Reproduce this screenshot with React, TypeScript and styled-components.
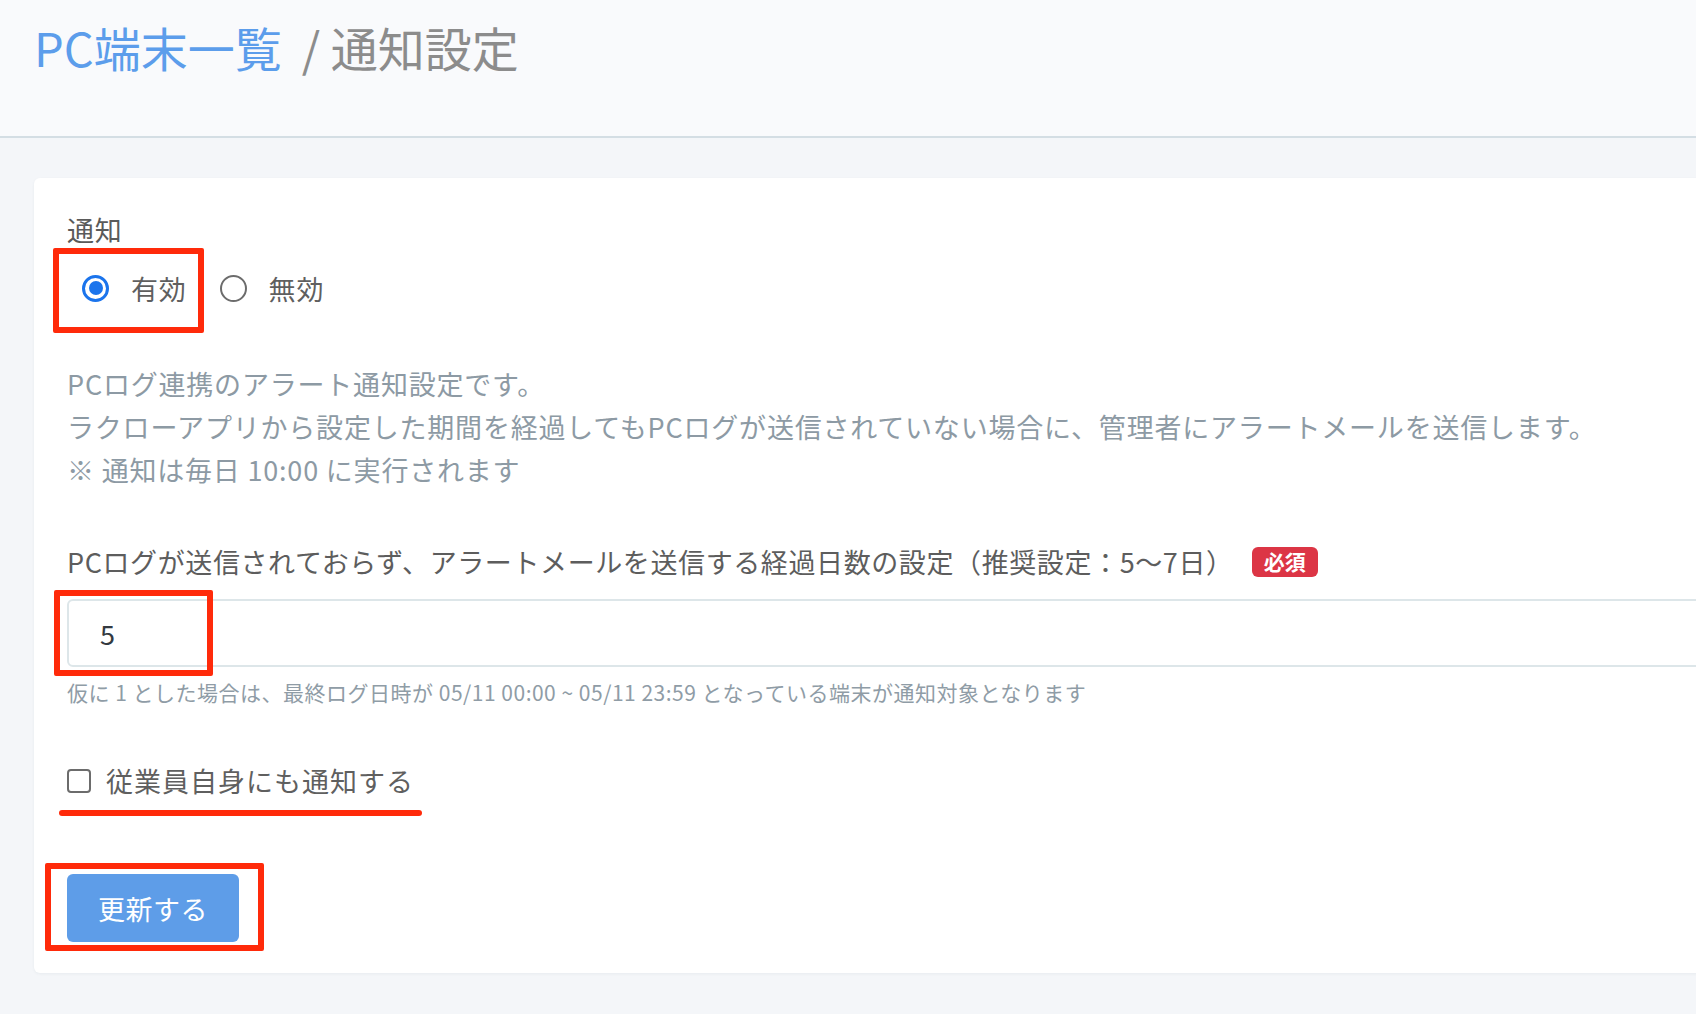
import styled, { createGlobalStyle } from 'styled-components';

const GlobalStyle = createGlobalStyle`
  html, body {
    margin: 0;
    padding: 0;
    overflow: hidden;
    background-color: #f4f6f9;
  }
  body {
    font-family: "Noto Sans CJK JP", "Noto Sans", sans-serif;
  }
`;

const Page = styled.div`
  width: 1696px;
  height: 1014px;
  background-color: #f4f6f9;
  overflow: hidden;
`;

const Header = styled.header`
  height: 138px;
  background-color: #f9fafc;
  border-bottom: 2px solid #d4dee4;
  display: flex;
  align-items: flex-start;
  padding-left: 34px;
  padding-top: 16px;
  box-sizing: border-box;
`;

const Breadcrumb = styled.h1`
  margin: 0;
  font-size: 47px;
  font-weight: 400;
  line-height: 62px;
  color: #8c8c8c;
  display: flex;
  align-items: center;
  gap: 20px;
`;

const CrumbLink = styled.span`
  color: #5c9deb;
`;

const Main = styled.main`
  padding: 40px 0 0 34px;
`;

const Card = styled.section`
  width: 1800px;
  background-color: #fff;
  border-radius: 6px;
  box-shadow: 0 1px 3px rgba(40, 60, 80, 0.06);
  padding: 32px 33px 31px;
  box-sizing: border-box;
  display: flex;
  flex-direction: column;
`;

const Label = styled.div`
  font-size: 27px;
  line-height: 39px;
  letter-spacing: 0.8px;
  color: #5a5a5a;
  display: flex;
  align-items: center;
`;

const RadioRow = styled.div`
  display: flex;
  align-items: center;
  height: 38px;
  margin-top: 20px;
  gap: 33px;
`;

const RadioOption = styled.label<{ $first?: boolean }>`
  position: relative;
  display: flex;
  align-items: center;
  gap: 22px;
  margin-left: ${p => (p.$first ? '15px' : '0')};
  font-size: 27px;
  letter-spacing: 0.8px;
  color: #5f5f5f;
`;

const RadioCircle = styled.span<{ $checked?: boolean }>`
  width: 27px;
  height: 27px;
  border-radius: 50%;
  box-sizing: border-box;
  border: ${p => (p.$checked ? '3px solid #1b74ec' : '2px solid #6c6c6c')};
  display: flex;
  align-items: center;
  justify-content: center;
  &::after {
    content: '';
    display: ${p => (p.$checked ? 'block' : 'none')};
    width: 14px;
    height: 14px;
    border-radius: 50%;
    background-color: #1b74ec;
  }
`;

const Annotation = styled.span<{ $top: number; $left: number; $w: number; $h: number; $bar?: boolean }>`
  position: absolute;
  top: ${p => p.$top}px;
  left: ${p => p.$left}px;
  width: ${p => p.$w}px;
  height: ${p => p.$h}px;
  box-sizing: border-box;
  pointer-events: none;
  border-radius: ${p => (p.$bar ? '3px' : '2px')};
  ${p => (p.$bar ? 'background-color: #ff2a0a;' : 'border: 6px solid #ff2a0a;')}
`;

const Description = styled.p`
  margin: 55px 0 0;
  font-size: 27px;
  line-height: 43px;
  letter-spacing: 0.8px;
  color: #8d9aa4;
`;

const FieldLabel = styled(Label)`
  margin-top: 51px;
  letter-spacing: 0.6px;
  color: #5d5d5d;
`;

const Badge = styled.span`
  display: inline-flex;
  align-items: center;
  justify-content: center;
  margin-left: 18px;
  height: 30px;
  padding: 0 12px;
  border-radius: 6px;
  background-color: #dc3545;
  color: #fff;
  font-size: 21px;
  font-weight: 700;
  letter-spacing: 0;
`;

const InputWrap = styled.div`
  position: relative;
  margin-top: 18px;
`;

const TextInput = styled.input`
  display: block;
  width: 100%;
  height: 68px;
  box-sizing: border-box;
  border: 2px solid #dde6e9;
  border-radius: 6px;
  padding: 0 31px;
  font-family: inherit;
  font-size: 27px;
  color: #333a40;
  background: #fff;
  outline: none;
`;

const Help = styled.div`
  margin-top: 10px;
  font-size: 21px;
  line-height: 30px;
  letter-spacing: 0.5px;
  color: #8f9ca6;
`;

const CheckRow = styled.label`
  position: relative;
  display: flex;
  align-items: center;
  gap: 15px;
  height: 39px;
  margin-top: 54px;
  font-size: 27px;
  letter-spacing: 1px;
  color: #5f5f5f;
  align-self: flex-start;
`;

const CheckBox = styled.span`
  width: 24px;
  height: 24px;
  box-sizing: border-box;
  border: 2px solid #6c6c6c;
  border-radius: 4px;
  background: #fff;
`;

const ButtonWrap = styled.div`
  position: relative;
  margin-top: 74px;
  align-self: flex-start;
`;

const PrimaryButton = styled.button`
  width: 172px;
  height: 68px;
  border: none;
  border-radius: 6px;
  background-color: #5e9de8;
  color: #fff;
  font-family: inherit;
  font-size: 27px;
  letter-spacing: 0.5px;
  cursor: pointer;
`;

export default function App() {
  return (
    <Page>
      <GlobalStyle />
      <Header>
        <Breadcrumb>
          <CrumbLink>PC端末一覧</CrumbLink>
          <span>/ 通知設定</span>
        </Breadcrumb>
      </Header>
      <Main>
        <Card>
          <Label>通知</Label>
          <RadioRow>
            <RadioOption $first>
              <RadioCircle $checked />
              有効
              <Annotation $top={-21} $left={-29} $w={151} $h={85} />
            </RadioOption>
            <RadioOption>
              <RadioCircle />
              無効
            </RadioOption>
          </RadioRow>

          <Description>
            PCログ連携のアラート通知設定です。
            <br />
            ラクローアプリから設定した期間を経過してもPCログが送信されていない場合に、管理者にアラートメールを送信します。
            <br />
            ※ 通知は毎日 10:00 に実行されます
          </Description>

          <FieldLabel>
            PCログが送信されておらず、アラートメールを送信する経過日数の設定（推奨設定：5〜7日）
            <Badge>必須</Badge>
          </FieldLabel>
          <InputWrap>
            <TextInput defaultValue="5" />
            <Annotation $top={-9} $left={-13} $w={159} $h={86} />
          </InputWrap>
          <Help>
            仮に 1 とした場合は、最終ログ日時が 05/11 00:00 ~ 05/11 23:59 となっている端末が通知対象となります
          </Help>

          <CheckRow>
            <CheckBox />
            従業員自身にも通知する
            <Annotation $bar $top={49} $left={-8} $w={363} $h={6} />
          </CheckRow>

          <ButtonWrap>
            <PrimaryButton>更新する</PrimaryButton>
            <Annotation $top={-11} $left={-22} $w={219} $h={88} />
          </ButtonWrap>
        </Card>
      </Main>
    </Page>
  );
}
